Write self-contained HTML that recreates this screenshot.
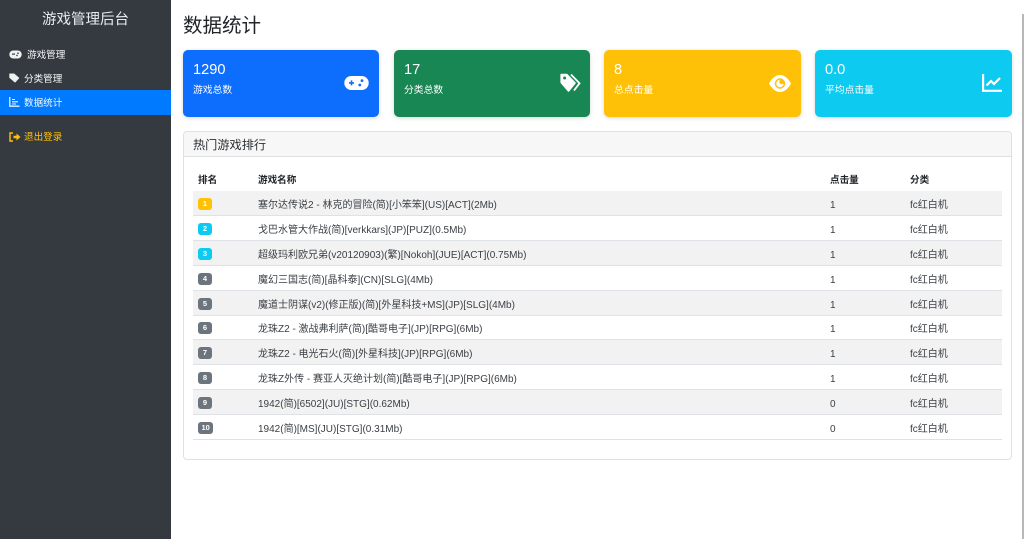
<!DOCTYPE html>
<html lang="zh"><head><meta charset="utf-8"><title>数据统计</title>
<style>
*{box-sizing:border-box;margin:0;padding:0}
html,body{width:1024px;height:539px;overflow:hidden;background:#fff}
body{position:relative;font-family:"Noto Sans CJK SC","Liberation Sans",sans-serif;color:#212529;filter:blur(.3px)}
.a{position:absolute;white-space:nowrap}
#side{left:0;top:0;width:171px;height:539px;background:#343a40}
.nav{font-size:9.6px;line-height:12px;color:#f8f9fa}
.card{position:absolute;top:50px;height:67px;border-radius:5px;color:#fff;box-shadow:0 1px 4px rgba(0,0,0,.16)}
.card .n{position:absolute;left:10px;top:11px;font:14.6px/18px "Liberation Sans",sans-serif}
.card .l{position:absolute;left:10px;top:33px;font-size:9.8px;line-height:13px}
.card svg{position:absolute}
#panel{left:183px;top:131px;width:829px;height:329px;border:1px solid #dfe0e2;border-radius:4px;background:#fff}
#ph{position:absolute;left:0;top:0;width:827px;height:25px;background:#f7f7f7;border-bottom:1px solid #dfdfdf;border-radius:3px 3px 0 0;font-size:12.2px;line-height:25px;padding-left:9px;color:#2b2f33}
.th{position:absolute;top:173px;font-size:9.6px;font-weight:bold;line-height:13px;color:#212529}
.r{position:absolute;left:193px;width:809px;height:25px;border-bottom:1px solid #dee2e6;font:10px/25px "Liberation Sans","Noto Sans CJK SC",sans-serif;color:#3a3f44}
.r.o{background:#f2f2f2}
.r span{position:absolute;top:2px;white-space:nowrap}
.r i{position:absolute;left:5px;top:7px;height:12px;min-width:14px;padding:0 3.5px;border-radius:3px;font:bold 7.5px/12px "Liberation Sans",sans-serif;color:#fff;text-align:center}
</style></head><body>
<div id="side" class="a"></div>
<div class="a" style="left:0;top:9px;width:171px;text-align:center;font-size:14.5px;line-height:20px;color:#e9ecef">游戏管理后台</div>
<svg class="a" style="left:9px;top:50px" width="13" height="9" viewBox="0 0 13 9"><rect x=".3" y=".5" width="12.4" height="8" rx="4" fill="#f0f1f2"/><rect x="3" y="3.5" width="3" height="1.2" fill="#343a40"/><circle cx="9" cy="3.2" r=".8" fill="#343a40"/><circle cx="8" cy="5.4" r=".8" fill="#343a40"/></svg>
<div class="a nav" style="left:27px;top:48px">游戏管理</div>
<svg class="a" style="left:9px;top:73px" width="12" height="10" viewBox="0 0 12 10"><path d="M.8 1H5L9.700 5 6 9 .8 4.500Z" fill="#f0f1f2" stroke="#f0f1f2" stroke-linejoin="round"/></svg>
<div class="a nav" style="left:24px;top:72px">分类管理</div>
<div class="a" style="left:0;top:90px;width:171px;height:25px;background:#007bff"></div>
<svg class="a" style="left:9px;top:97px" width="11" height="10" viewBox="0 0 11 10"><path d="M.8 0V9.2H10.5" fill="none" stroke="#e8f2ff" stroke-width="1.3"/><path d="M3 2.5H6M3 4.8H9M3 7H7" stroke="#e8f2ff" stroke-width="1.1"/></svg>
<div class="a nav" style="left:24px;top:96px;color:#f4f9ff">数据统计</div>
<svg class="a" style="left:9px;top:132px" width="12" height="10" viewBox="0 0 12 10"><path d="M4 1H1V9H4" fill="none" stroke="#ffc107" stroke-width="1.4"/><path d="M4.500 3.800H7.500V1.500L11.500 5 7.500 8.500V6.200H4.500Z" fill="#ffc107"/></svg>
<div class="a nav" style="left:24px;top:130px;color:#ffc107">退出登录</div>

<div class="a" style="left:183px;top:10px;font-size:19.5px;line-height:28px;color:#212529">数据统计</div>

<div class="card" style="left:183px;width:196px;background:#0d6efd"><div class="n">1290</div><div class="l">游戏总数</div>
<svg style="left:161px;top:25px" width="25" height="16" viewBox="0 0 25 16"><rect x=".3" y="1" width="24.400" height="14" rx="7" fill="#fff"/><path d="M5 7.900H10M7.500 5.400V10.400" stroke="#0d6efd" stroke-width="1.600"/><circle cx="18" cy="5.600" r="1.400" fill="#0d6efd"/><circle cx="15.800" cy="10" r="1.400" fill="#0d6efd"/></svg></div>
<div class="card" style="left:394px;width:196px;background:#198754"><div class="n">17</div><div class="l">分类总数</div>
<svg style="left:166px;top:23px" width="21" height="20" viewBox="0 0 21 20"><path d="M1.200 1.500H6.800L15 10 8.500 18 1.200 9.500Z" fill="#fff" stroke="#fff" stroke-width="1.600" stroke-linejoin="round"/><circle cx="4.600" cy="5" r="1.500" fill="#198754"/><path d="M11 1.500 19.500 10.300 14 17.500" fill="none" stroke="#fff" stroke-width="1.800"/></svg></div>
<div class="card" style="left:604px;width:197px;background:#ffc107"><div class="n">8</div><div class="l">总点击量</div>
<svg style="left:165px;top:25px" width="22" height="17" viewBox="0 0 22 17"><path fill-rule="evenodd" d="M0 8.500C3 3 7 0 11 0S19 3 22 8.500C19 14 15 17 11 17S3 14 0 8.500ZM11 3.300A5.200 5.200 0 1 0 11 13.700 5.200 5.200 0 1 0 11 3.300Z" fill="#fff"/><path fill-rule="evenodd" d="M11 4.800A3.700 3.700 0 1 0 14.700 8.500 2.200 2.200 0 0 1 11 4.800Z" fill="#fff"/></svg></div>
<div class="card" style="left:815px;width:197px;background:#0dcaf0"><div class="n">0.0</div><div class="l">平均点击量</div>
<svg style="left:167px;top:24px" width="20" height="18" viewBox="0 0 20 18"><path d="M1.100 0V16.800H20" fill="none" stroke="#fff" stroke-width="2.200"/><path d="M4.500 11.500 9 7 12 10 18 4" fill="none" stroke="#fff" stroke-width="2.200"/></svg></div>

<div id="panel" class="a"><div id="ph">热门游戏排行</div></div>
<div class="th" style="left:198px">排名</div><div class="th" style="left:258px">游戏名称</div><div class="th" style="left:830px">点击量</div><div class="th" style="left:910px">分类</div>

<div class="r o" style="top:191px"><i style="background:#ffc107">1</i><span style="left:65px">塞尔达传说2 - 林克的冒险(简)[小笨笨](US)[ACT](2Mb)</span><span style="left:637px">1</span><span style="left:717px">fc红白机</span></div>
<div class="r" style="top:216px"><i style="background:#0dcaf0">2</i><span style="left:65px">戈巴水管大作战(简)[verkkars](JP)[PUZ](0.5Mb)</span><span style="left:637px">1</span><span style="left:717px">fc红白机</span></div>
<div class="r o" style="top:241px"><i style="background:#0dcaf0">3</i><span style="left:65px">超级玛利欧兄弟(v20120903)(繁)[Nokoh](JUE)[ACT](0.75Mb)</span><span style="left:637px">1</span><span style="left:717px">fc红白机</span></div>
<div class="r" style="top:266px"><i style="background:#6c757d">4</i><span style="left:65px">魔幻三国志(简)[晶科泰](CN)[SLG](4Mb)</span><span style="left:637px">1</span><span style="left:717px">fc红白机</span></div>
<div class="r o" style="top:291px"><i style="background:#6c757d">5</i><span style="left:65px">魔道士阴谋(v2)(修正版)(简)[外星科技+MS](JP)[SLG](4Mb)</span><span style="left:637px">1</span><span style="left:717px">fc红白机</span></div>
<div class="r" style="top:315px"><i style="background:#6c757d">6</i><span style="left:65px">龙珠Z2 - 激战弗利萨(简)[酷哥电子](JP)[RPG](6Mb)</span><span style="left:637px">1</span><span style="left:717px">fc红白机</span></div>
<div class="r o" style="top:340px"><i style="background:#6c757d">7</i><span style="left:65px">龙珠Z2 - 电光石火(简)[外星科技](JP)[RPG](6Mb)</span><span style="left:637px">1</span><span style="left:717px">fc红白机</span></div>
<div class="r" style="top:365px"><i style="background:#6c757d">8</i><span style="left:65px">龙珠Z外传 - 赛亚人灭绝计划(简)[酷哥电子](JP)[RPG](6Mb)</span><span style="left:637px">1</span><span style="left:717px">fc红白机</span></div>
<div class="r o" style="top:390px"><i style="background:#6c757d">9</i><span style="left:65px">1942(简)[6502](JU)[STG](0.62Mb)</span><span style="left:637px">0</span><span style="left:717px">fc红白机</span></div>
<div class="r" style="top:415px"><i style="background:#6c757d">10</i><span style="left:65px">1942(简)[MS](JU)[STG](0.31Mb)</span><span style="left:637px">0</span><span style="left:717px">fc红白机</span></div>

<div class="a" style="left:1022px;top:14px;width:2px;height:525px;background:#b8b8b8"></div>
</body></html>
